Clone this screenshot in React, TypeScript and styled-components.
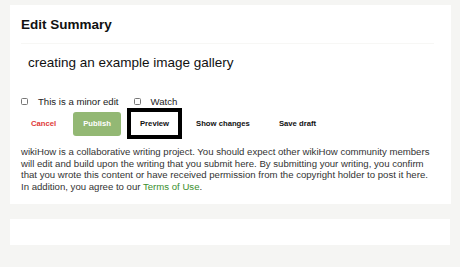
import styled, { createGlobalStyle } from 'styled-components'

const GlobalStyle = createGlobalStyle`
  html, body {
    margin: 0;
    padding: 0;
    background: #f5f5f3;
    font-family: "Liberation Sans", Arial, sans-serif;
  }
`

const App = () => {
  return (
    <Page>
      <GlobalStyle />
      <Card>
        <Title>Edit Summary</Title>
        <SummaryInput defaultValue="creating an example image gallery" />
        <OptionsRow>
          <Option>
            <Check type="checkbox" />
            <span>This is a minor edit</span>
          </Option>
          <Option>
            <Check type="checkbox" />
            <span>Watch</span>
          </Option>
        </OptionsRow>
        <ButtonRow>
          <Button $variant="danger">Cancel</Button>
          <Button $variant="primary" $space={7}>Publish</Button>
          <Button $variant="focused" $space={6}>Preview</Button>
          <Button $space={4}>Show changes</Button>
          <Button $space={9}>Save draft</Button>
        </ButtonRow>
        <Notice>
          wikiHow is a collaborative writing project. You should expect other wikiHow community members
          <br />
          will edit and build upon the writing that you submit here. By submitting your writing, you confirm
          <br />
          that you wrote this content or have received permission from the copyright holder to post it here.
          <br />
          In addition, you agree to our <Link href="#">Terms of Use</Link>.
        </Notice>
      </Card>
      <EmptyCard />
    </Page>
  )
}

const Page = styled.div`
  width: 460px;
  height: 267px;
  padding: 5px 9px 0 10px;
  box-sizing: border-box;
  overflow: hidden;
`

const Card = styled.div`
  background: #fff;
  padding: 12px 17px 12px 11px;
  box-sizing: border-box;
  width: 441px;
  height: 199px;
  display: flex;
  flex-direction: column;
`

const EmptyCard = styled.div`
  background: #fff;
  margin-top: 15px;
  width: 440px;
  height: 26px;
`

const Title = styled.h2`
  margin: 0;
  font-size: 13.5px;
  line-height: 16px;
  font-weight: bold;
  color: #111;
`

const SummaryInput = styled.input`
  margin-top: 10px;
  height: 38px;
  width: 413px;
  box-sizing: border-box;
  border: none;
  border-top: 1px solid #f7f7f5;
  padding: 0 7px;
  font-family: inherit;
  font-size: 13.5px;
  color: #111;
  outline: none;
  background: #fff;
`

const OptionsRow = styled.div`
  margin-top: 14px;
  height: 12px;
  display: flex;
  align-items: center;
  gap: 15px;
  font-size: 9.6px;
  color: #222;
`

const Option = styled.label`
  display: flex;
  align-items: center;
  gap: 10px;
`

const Check = styled.input`
  appearance: none;
  margin: 0;
  width: 7px;
  height: 7px;
  border: 1px solid #777;
  border-radius: 1.5px;
  background: #fff;
  box-sizing: border-box;
`

const ButtonRow = styled.div`
  margin-top: 1px;
  height: 31px;
  display: flex;
  align-items: center;
`

const variants = {
  danger: 'color: #de3a3a; background: transparent; border: none;',
  primary: 'color: #fff; background: #93b874; border: none; border-radius: 3px;',
  focused: 'color: #111; background: #fff; border: 4px solid #000; height: 31px; padding: 0 9px;',
  plain: 'color: #111; background: transparent; border: none;',
}

const Button = styled.button<{ $variant?: keyof typeof variants; $space?: number }>`
  height: 24px;
  padding: 0 10px;
  margin: 0 0 0 ${(p) => p.$space ?? 0}px;
  font-family: inherit;
  font-size: 7.7px;
  font-weight: bold;
  box-sizing: border-box;
  cursor: pointer;
  ${(p) => variants[p.$variant ?? 'plain']}
`

const Notice = styled.p`
  margin: 7px 0 0;
  font-size: 9.6px;
  line-height: 11.5px;
  color: #333;
  white-space: nowrap;
`

const Link = styled.a`
  color: #3a8f2e;
  text-decoration: none;
`

export default App
